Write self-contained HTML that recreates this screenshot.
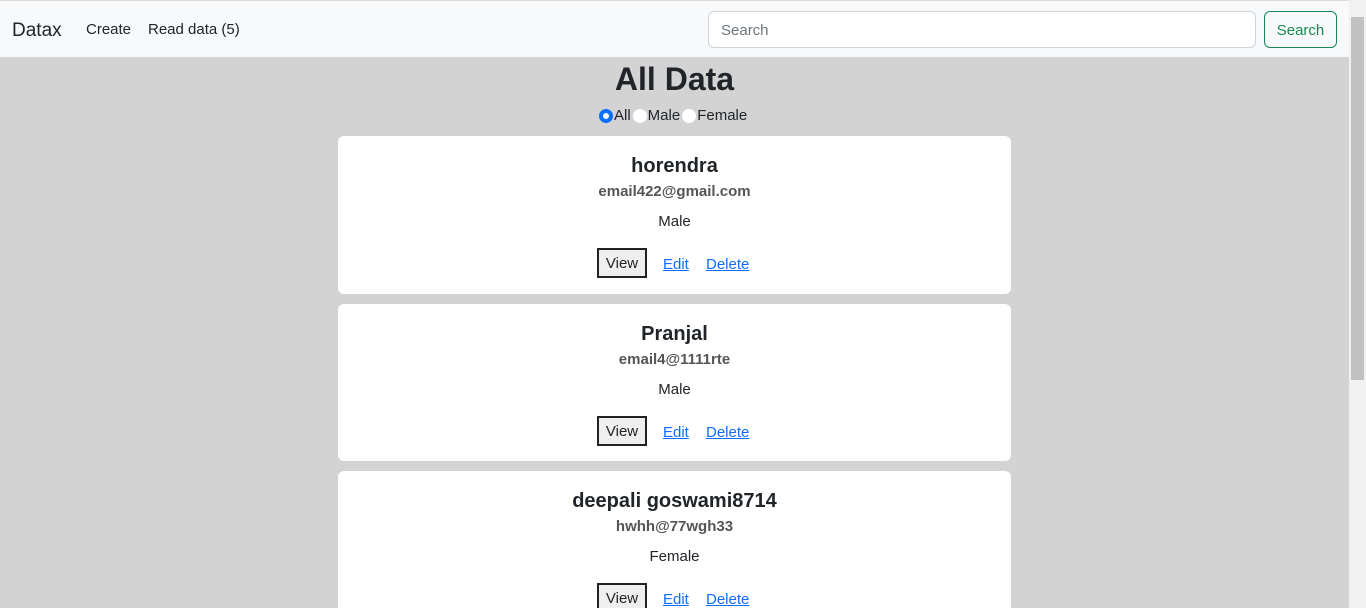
<!DOCTYPE html>
<html style="overflow:hidden;height:608px"><head><style>
body{margin:0;width:1366px;height:608px;overflow:hidden;background:#d3d3d3;font-family:"Liberation Sans",sans-serif;color:#212529;position:relative}
nav{position:absolute;left:0;top:0;width:1349px;height:57px;background:#f8f9fa;border-top:1px solid #ddd;box-sizing:border-box}
.brand{position:absolute;left:12px;top:19px;font-size:19px}
.nl{position:absolute;top:20px;font-size:15px}
.search{position:absolute;left:708px;top:10px;width:548px;height:37px;border:1px solid #ced4da;border-radius:6px;background:#fff;box-sizing:border-box;font-size:15px;color:#6c757d;padding:10px 12px}
.btn{position:absolute;left:1264px;top:10px;width:73px;height:37px;border:1px solid #198754;border-radius:6px;color:#198754;font-size:15px;text-align:center;line-height:37px;box-sizing:border-box}
.sb{position:absolute;left:1349px;top:0;width:17px;height:608px;background:#f1f1f1}
.sb div{position:absolute;left:2px;top:17px;width:13px;height:363px;background:#c1c1c1}
h1{position:absolute;left:0;width:1349px;top:61px;margin:0;text-align:center;font-size:32px;font-weight:bold}
.radios{position:absolute;left:599px;top:107px;font-size:15px;display:flex;align-items:center}
.r{width:14px;height:14px;border-radius:50%;background:#fff;display:inline-block;box-sizing:border-box;margin-right:1px}
.r.on{border:4px solid #0d6efd}
.card{position:absolute;left:338px;width:673px;background:#fff;border-radius:6px;text-align:center}
.n{position:absolute;width:100%;top:19px;font-size:20px;font-weight:bold}
.e{position:absolute;width:100%;top:47px;font-size:15px;font-weight:bold;color:#555}
.g{position:absolute;width:100%;top:77px;font-size:15px}
.v{position:absolute;left:259px;top:112px;width:50px;height:30px;border:2px solid #222;background:#efefef;box-sizing:border-box;font-size:15px;line-height:28px}
.l{position:absolute;top:120px;font-size:15px;color:#0d6efd;text-decoration:underline}
</style></head><body>
<nav><span class="brand">Datax</span><span class="nl" style="left:86px">Create</span><span class="nl" style="left:148px">Read data (5)</span>
<div class="search">Search</div><div class="btn">Search</div></nav>
<div class="sb"><div></div></div>
<h1>All Data</h1>
<div class="radios"><span class="r on"></span>All<span class="r" style="margin-left:2px"></span>Male<span class="r" style="margin-left:2px"></span>Female</div>
<div class="card" style="top:136px;height:158px"><div class="n">horendra</div><div class="e">email422@gmail.com</div><div class="g">Male</div><div class="v">View</div><span class="l" style="left:325px">Edit</span><span class="l" style="left:368px">Delete</span></div>
<div class="card" style="top:304px;height:157px"><div class="n">Pranjal</div><div class="e">email4@1111rte</div><div class="g">Male</div><div class="v">View</div><span class="l" style="left:325px">Edit</span><span class="l" style="left:368px">Delete</span></div>
<div class="card" style="top:471px;height:137px;border-radius:6px 6px 0 0"><div class="n">deepali goswami8714</div><div class="e">hwhh@77wgh33</div><div class="g">Female</div><div class="v">View</div><span class="l" style="left:325px">Edit</span><span class="l" style="left:368px">Delete</span></div>
</body></html>
